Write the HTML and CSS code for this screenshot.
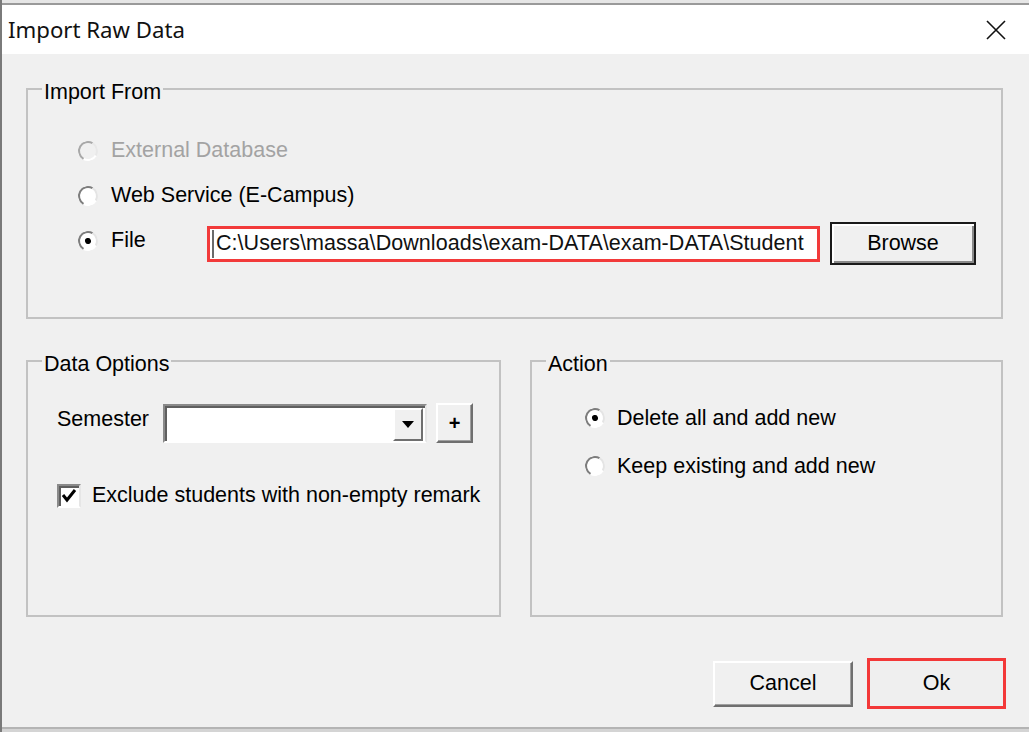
FILE: index.html
```html
<!DOCTYPE html>
<html>

<head>
    <meta charset="utf-8">
    <title>Import Raw Data</title>
    <link rel="stylesheet" href="styles.css">
</head>

<body>
    <div class="window">
        <div class="strip"></div>
        <div class="titlebar">
            <span class="title">Import Raw Data</span>
            <svg class="close" width="20" height="20" viewBox="0 0 20 20">
                <path d="M1 1 L19 19 M19 1 L1 19" stroke="#111" stroke-width="1.6" fill="none"/>
            </svg>
        </div>

        <div class="client">
            <!-- source selection -->
            <fieldset class="group import-from">
                <legend>Import From</legend>
                <div class="group-body">
                    <div class="opt disabled">
                        <span class="radio"></span>
                        <span class="label">External Database</span>
                    </div>
                    <div class="opt">
                        <span class="radio"></span>
                        <span class="label">Web Service (E-Campus)</span>
                    </div>
                    <div class="opt">
                        <span class="radio checked"></span>
                        <span class="label file-label">File</span>
                        <div class="path-box">
                            <span class="caret"></span>
                            <span class="path">C:\Users\massa\Downloads\exam-DATA\exam-DATA\Student</span>
                        </div>
                        <div class="btn browse">Browse</div>
                    </div>
                </div>
            </fieldset>

            <div class="groups">
                <fieldset class="group data-options">
                    <legend>Data Options</legend>
                    <div class="group-body">
                        <div class="semester-row">
                            <span class="semester-label">Semester</span>
                            <div class="combo">
                                <div class="combo-text"></div>
                                <div class="combo-drop">
                                    <svg width="12" height="7" viewBox="0 0 12 7"><path d="M0 0 H12 L6 7 Z" fill="#000"/></svg>
                                </div>
                            </div>
                            <div class="btn plus">+</div>
                        </div>
                        <div class="check-row">
                            <span class="checkbox">
                                <svg width="18" height="18" viewBox="0 0 18 18"><path d="M3 8 L7 13 L15 3" stroke="#000" stroke-width="3" fill="none"/></svg>
                            </span>
                            <span class="label">Exclude students with non-empty remark</span>
                        </div>
                    </div>
                </fieldset>

                <fieldset class="group action">
                    <legend>Action</legend>
                    <div class="group-body">
                        <div class="opt">
                            <span class="radio checked"></span>
                            <span class="label">Delete all and add new</span>
                        </div>
                        <div class="opt">
                            <span class="radio"></span>
                            <span class="label">Keep existing and add new</span>
                        </div>
                    </div>
                </fieldset>
            </div>

            <div class="buttons">
                <div class="btn cancel">Cancel</div>
                <div class="btn ok">Ok</div>
            </div>
        </div>
        <div class="bottom-edge"></div>
    </div>
</body>

</html>
```

FILE: styles.css
```css
body {
    margin: 0;
    background-color: #f0f0f0;
    font-family: "Liberation Sans", Arial, sans-serif;
    font-size: 21.5px;
    color: #000;
}

.window {
    width: 1029px;
    height: 732px;
    border-left: 2px solid #7a7a7a;
    box-sizing: border-box;
    overflow: hidden;
}

.strip {
    height: 3px;
    background-color: #e6e6e6;
    border-bottom: 2px solid #9a9a9a;
}

.titlebar {
    height: 49px;
    background-color: #fff;
    display: flex;
    align-items: center;
    justify-content: space-between;
    padding: 0 23px 0 6px;
}

.title {
    font-family: "Noto Sans", "Open Sans", sans-serif;
    font-size: 22.2px;
    color: #111;
}

.client {
    padding: 20px 26px 18px 24px;
    height: 673px;
    box-sizing: border-box;
}

/* group boxes */
.group {
    margin: 0;
    padding: 0;
    min-width: 0;
    border: 2px solid #c2c2c2;
    box-sizing: border-box;
}

.group legend {
    padding: 6px 2px 0;
    margin-left: 14px;
    line-height: 24px;
}

.import-from .group-body {
    padding: 24px 0 54px 50px;
}

.opt {
    display: flex;
    align-items: center;
    height: 45px;
}

.opt .label {
    margin-left: 13px;
}

.opt.disabled .label {
    color: #a3a3a3;
}

.radio {
    width: 20px;
    height: 20px;
    box-sizing: border-box;
    border-radius: 50%;
    border: 2px solid;
    border-color: #7d7d7d #e4e4e4 #ffffff #7d7d7d;
    background-color: #fff;
    display: flex;
    align-items: center;
    justify-content: center;
    transform: rotate(-15deg);
    flex: none;
}

.opt.disabled .radio {
    background-color: #f0f0f0;
    border-color: #a8a8a8 #e8e8e8 #ffffff #a8a8a8;
}

.radio.checked::after {
    content: "";
    width: 6px;
    height: 6px;
    border-radius: 50%;
    background-color: #000;
}

.file-label {
    width: 83px;
    flex: none;
}

.import-from .file-label {
    width: 83px;
    margin-right: 13px;
}

.path-box {
    width: 613px;
    height: 36px;
    margin-top: 6px;
    box-sizing: border-box;
    border: 3px solid #f23a3a;
    background-color: #fff;
    display: flex;
    align-items: center;
    overflow: hidden;
    white-space: nowrap;
    flex: none;
}

.caret {
    width: 2px;
    height: 28px;
    margin: 0 2px 0 2px;
    background-color: #6a6a6a;
    flex: none;
}

.path {
    color: #111;
    letter-spacing: 0.05px;
}

/* buttons */
.btn {
    display: flex;
    align-items: center;
    justify-content: center;
    box-sizing: border-box;
    background-color: #f0f0f0;
    border: 2px solid;
    border-color: #ffffff #6f6f6f #6f6f6f #ffffff;
    box-shadow: inset -1px -1px 0 #a0a0a0;
    flex: none;
}

.browse {
    width: 146px;
    height: 43px;
    margin: 6px 0 0 10px;
    border: 2px solid #1a1a1a;
    box-shadow: inset 2px 2px 0 #ffffff, inset -2px -2px 0 #8a8a8a;
}

.groups {
    display: flex;
    gap: 29px;
    height: 271px;
    margin-top: 27px;
}

.data-options {
    width: 475px;
}

.data-options .group-body {
    padding: 27px 0 0 29px;
}

.action {
    flex: 1;
}

.action .group-body {
    padding: 18px 0 0 53px;
}

.action .opt {
    height: 48px;
}

.action .opt .label {
    margin-left: 12px;
}

.semester-row {
    display: flex;
    align-items: center;
}

.semester-label {
    width: 106px;
    margin-bottom: 8px;
}

.combo {
    width: 264px;
    height: 39px;
    box-sizing: border-box;
    border: 2px solid;
    border-color: #8a8a8a #e6e6e6 #ffffff #8a8a8a;
    box-shadow: inset 2px 2px 0 #5f5f5f;
    background-color: #fff;
    display: flex;
    padding: 2px 2px 0 2px;
}

.combo-text {
    flex: 1;
}

.combo-drop {
    width: 30px;
    background-color: #f0f0f0;
    box-sizing: border-box;
    border: 2px solid;
    border-color: #ffffff #6f6f6f #6f6f6f #ffffff;
    display: flex;
    align-items: center;
    justify-content: center;
}

.plus {
    width: 37px;
    height: 40px;
    margin-left: 9px;
    font-weight: bold;
    font-size: 20px;
}

.check-row {
    display: flex;
    align-items: center;
    margin-top: 40px;
}

.checkbox {
    width: 24px;
    height: 24px;
    box-sizing: border-box;
    border: 2px solid;
    border-color: #8a8a8a #e6e6e6 #ffffff #8a8a8a;
    box-shadow: inset 2px 2px 0 #5f5f5f;
    background-color: #fff;
    display: flex;
    align-items: center;
    justify-content: center;
}

.check-row .label {
    margin-left: 11px;
}

.buttons {
    display: flex;
    justify-content: flex-end;
    align-items: center;
    gap: 14px;
    margin: 41px -3px 0 0;
}

.cancel {
    width: 140px;
    height: 46px;
}

.ok {
    width: 139px;
    height: 51px;
    border: 3px solid #f33838;
    box-shadow: none;
    background-color: #efefef;
}

.bottom-edge {
    height: 5px;
    border-top: 2px solid #b4b4b4;
    background-color: #d4d4d4;
    box-sizing: border-box;
}
```
